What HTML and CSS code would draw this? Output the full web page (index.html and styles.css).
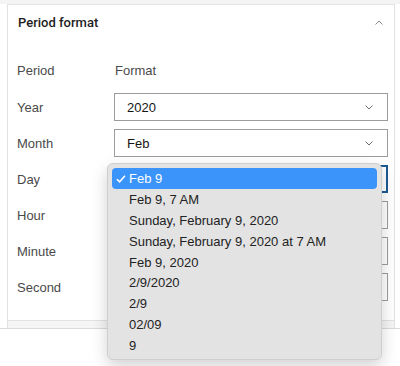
FILE: index.html
```html
<!DOCTYPE html>
<html lang="en">
<head>
    <meta charset="UTF-8">
    <meta name="viewport" content="width=device-width, initial-scale=1.0">
    <title>Period format</title>
    <link rel="stylesheet" href="styles.css">
</head>
<body>
    <div class="top-strip"></div>
    <section class="panel">
        <header class="panel-head">
            <span class="panel-title">Period format</span>
            <svg class="chev-up" width="8" height="5" viewBox="0 0 8 5"><path d="M0.5 4.5 L4 1 L7.5 4.5" fill="none" stroke="#8c8c8c" stroke-width="1"/></svg>
        </header>
        <div class="panel-body">
            <div class="row">
                <span class="label">Period</span>
                <span class="label col-head">Format</span>
            </div>
            <div class="row">
                <span class="label">Year</span>
                <div class="select"><span>2020</span><svg width="8" height="5" viewBox="0 0 8 5"><path d="M0.5 0.5 L4 4 L7.5 0.5" fill="none" stroke="#6e6e6e" stroke-width="1"/></svg></div>
            </div>
            <div class="row">
                <span class="label">Month</span>
                <div class="select"><span>Feb</span><svg width="8" height="5" viewBox="0 0 8 5"><path d="M0.5 0.5 L4 4 L7.5 0.5" fill="none" stroke="#6e6e6e" stroke-width="1"/></svg></div>
            </div>
            <div class="row">
                <span class="label">Day</span>
                <div class="select focused"></div>
            </div>
            <div class="row">
                <span class="label">Hour</span>
                <div class="select"></div>
            </div>
            <div class="row">
                <span class="label">Minute</span>
                <div class="select"></div>
            </div>
            <div class="row">
                <span class="label">Second</span>
                <div class="select"></div>
            </div>
        </div>
    </section>
    <div class="next-strip"></div>
    <div class="base-line"></div>

    <ul class="menu">
        <li class="item selected"><svg class="check" width="10" height="8" viewBox="0 0 10 8"><path d="M1 4.2 L3.6 6.8 L9 0.8" fill="none" stroke="#fff" stroke-width="1.6"/></svg><span>Feb 9</span></li>
        <li class="item"><span></span><span>Feb 9, 7 AM</span></li>
        <li class="item"><span></span><span>Sunday, February 9, 2020</span></li>
        <li class="item"><span></span><span>Sunday, February 9, 2020 at 7 AM</span></li>
        <li class="item"><span></span><span>Feb 9, 2020</span></li>
        <li class="item"><span></span><span>2/9/2020</span></li>
        <li class="item"><span></span><span>2/9</span></li>
        <li class="item"><span></span><span>02/09</span></li>
        <li class="item"><span></span><span>9</span></li>
    </ul>
</body>
</html>
```

FILE: styles.css
```css
body {
    margin: 0;
    background: #ffffff;
    font-family: "Liberation Sans", Arial, sans-serif;
    font-size: 13px;
    color: #4a4a4a;
}
.top-strip {
    height: 4px;
    background: #f4f4f4;
}
.panel {
    margin: 0 5px 0 7px;
    border: 1px solid #e2e2e2;
    background: #ffffff;
}
.panel-head {
    height: 34px;
    display: flex;
    align-items: center;
    justify-content: space-between;
    padding: 0 11px 0 10px;
}
.panel-title {
    font-family: Roboto, "Liberation Sans", sans-serif;
    font-weight: 500;
    font-size: 13px;
    color: #1e1e1e;
}
.panel-body {
    padding: 17px 6px 19px 9px;
    display: flex;
    flex-direction: column;
    gap: 8px;
}
.row {
    display: grid;
    grid-template-columns: 97px 1fr;
    height: 28px;
    align-items: center;
}
.row:first-child {
    height: 29px;
}
.label {
    color: #4a4a4a;
}
.col-head {
    padding-left: 1px;
}
.select {
    height: 28px;
    box-sizing: border-box;
    border: 1px solid #9c9c9c;
    display: flex;
    align-items: center;
    justify-content: space-between;
    padding: 0 14px 0 12px;
    color: #151515;
}
.select svg {
    margin-top: 1px;
}
.select.focused {
    border: 2px solid #1d5a94;
}
.next-strip {
    margin: 0 5px 0 7px;
    height: 7px;
    background: #f5f5f5;
    border-left: 1px solid #e2e2e2;
    border-right: 1px solid #e2e2e2;
}
.base-line {
    border-top: 1px solid #dadada;
}
.menu {
    position: absolute;
    left: 107px;
    top: 163px;
    width: 275px;
    box-sizing: border-box;
    margin: 0;
    padding: 4px;
    list-style: none;
    background: #e3e3e3;
    border: 1px solid #cfcfcf;
    border-radius: 6px;
    box-shadow: 0 6px 16px rgba(0, 0, 0, 0.18);
    color: #222222;
}
.item {
    display: grid;
    grid-template-columns: 13px auto;
    align-items: center;
    box-sizing: border-box;
    height: 20.75px;
    padding: 1px 0 0 4px;
    border-radius: 4px;
}
.item.selected {
    height: 21px;
    padding-top: 0;
    background: #3b94f9;
    color: #ffffff;
}
```
